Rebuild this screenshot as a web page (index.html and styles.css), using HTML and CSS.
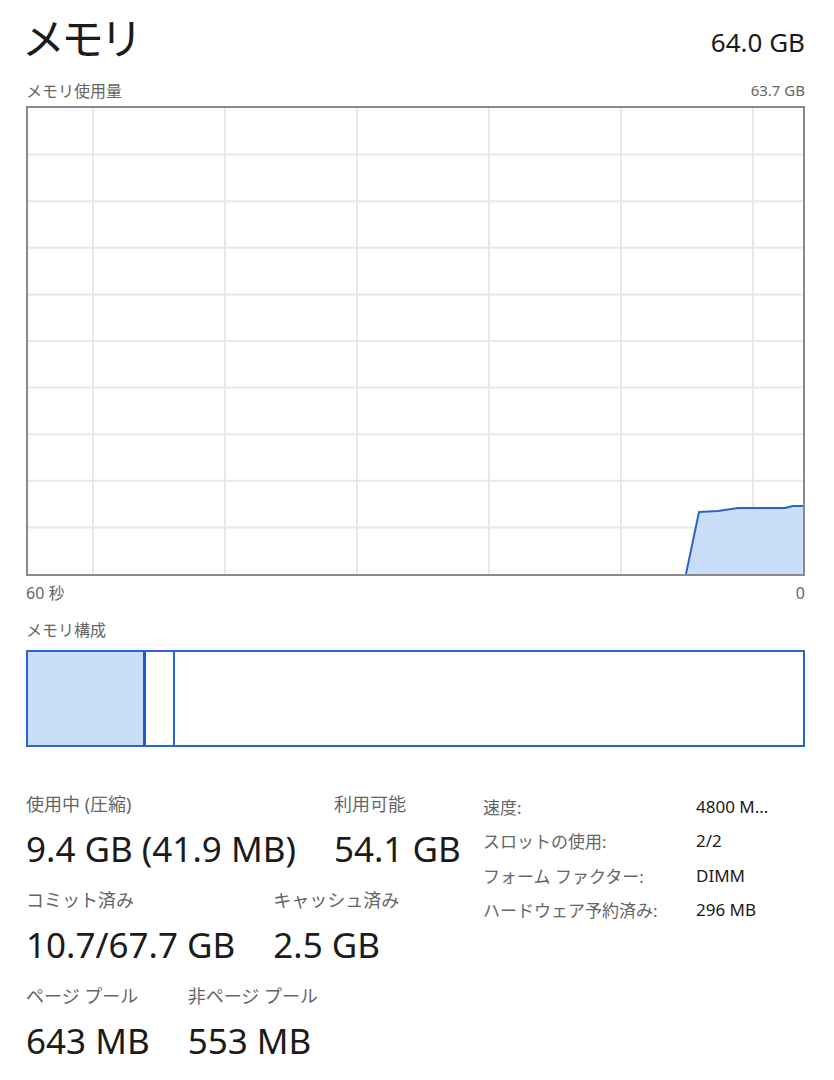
FILE: index.html
```html
<!DOCTYPE html>
<html lang="ja">
<head>
<meta charset="UTF-8">
<title>メモリ</title>
<link rel="stylesheet" href="styles.css">
</head>
<body>

<div class="page">
  <div class="header">
    <h1 class="title">メモリ</h1>
    <div class="total">64.0 GB</div>
  </div>

  <div class="caption-row">
    <span>メモリ使用量</span>
    <span class="caption-num">63.7 GB</span>
  </div>

  <!-- 使用量グラフ (60秒) -->
  <div class="graph">
    <svg width="775" height="466" viewBox="0 0 775 466">
      <g class="grid">
        <line x1="65" y1="0" x2="65" y2="466"/>
        <line x1="197" y1="0" x2="197" y2="466"/>
        <line x1="329" y1="0" x2="329" y2="466"/>
        <line x1="461" y1="0" x2="461" y2="466"/>
        <line x1="593" y1="0" x2="593" y2="466"/>
        <line x1="725" y1="0" x2="725" y2="466"/>
        <line x1="0" y1="46.6" x2="775" y2="46.6"/>
        <line x1="0" y1="93.2" x2="775" y2="93.2"/>
        <line x1="0" y1="139.8" x2="775" y2="139.8"/>
        <line x1="0" y1="186.4" x2="775" y2="186.4"/>
        <line x1="0" y1="233" x2="775" y2="233"/>
        <line x1="0" y1="279.6" x2="775" y2="279.6"/>
        <line x1="0" y1="326.2" x2="775" y2="326.2"/>
        <line x1="0" y1="372.8" x2="775" y2="372.8"/>
        <line x1="0" y1="419.4" x2="775" y2="419.4"/>
      </g>
      <polygon class="area" points="658,466 671,404 690,403 710,400 757,400 765,398 775,398 775,466"/>
      <polyline class="trace" points="658,466 671,404 690,403 710,400 757,400 765,398 775,398"/>
    </svg>
  </div>

  <div class="axis-row">
    <span>60 秒</span>
    <span>0</span>
  </div>

  <div class="caption">メモリ構成</div>
  <div class="composition">
    <div class="seg seg-used"></div>
    <div class="seg seg-modified"></div>
    <div class="seg seg-free"></div>
  </div>

  <div class="stats">
    <div class="stats-left">
      <div class="stat-row">
        <div class="stat">
          <div class="stat-label">使用中 (圧縮)</div>
          <div class="stat-value">9.4 GB (41.9 MB)</div>
        </div>
        <div class="stat">
          <div class="stat-label">利用可能</div>
          <div class="stat-value">54.1 GB</div>
        </div>
      </div>
      <div class="stat-row">
        <div class="stat">
          <div class="stat-label">コミット済み</div>
          <div class="stat-value">10.7/67.7 GB</div>
        </div>
        <div class="stat">
          <div class="stat-label">キャッシュ済み</div>
          <div class="stat-value">2.5 GB</div>
        </div>
      </div>
      <div class="stat-row">
        <div class="stat">
          <div class="stat-label">ページ プール</div>
          <div class="stat-value">643 MB</div>
        </div>
        <div class="stat">
          <div class="stat-label">非ページ プール</div>
          <div class="stat-value">553 MB</div>
        </div>
      </div>
    </div>

    <table class="specs">
      <tr><td class="spec-key">速度:</td><td class="spec-val">4800 M...</td></tr>
      <tr><td class="spec-key">スロットの使用:</td><td class="spec-val">2/2</td></tr>
      <tr><td class="spec-key">フォーム ファクター:</td><td class="spec-val">DIMM</td></tr>
      <tr><td class="spec-key">ハードウェア予約済み:</td><td class="spec-val">296 MB</td></tr>
    </table>
  </div>
</div>

</body>
</html>
```

FILE: styles.css
```css
body { margin: 0; background: #fff; color: #1b1b1b; font-family: "Noto Sans", "Noto Sans CJK JP", sans-serif; }
.page { padding: 0 29px 0 26px; }

.header { display: flex; justify-content: space-between; align-items: flex-end; height: 62px; }
.title { margin: 0 0 0 -4px; font-family: "Noto Sans CJK JP", sans-serif; font-size: 43px; font-weight: normal; line-height: 52px; letter-spacing: -4px; }
.total { font-size: 26px; line-height: 30px; margin-bottom: 5px; }

.caption-row { display: flex; justify-content: space-between; align-items: center; margin-top: 16px; margin-bottom: 4px;
               height: 24px; font-size: 16px; color: #666; }
.caption-num { font-size: 15px; }

.graph { border: 2px solid #8a8a8a; height: 466px; }
.graph svg { display: block; }
.grid line { stroke: #e8e8e8; stroke-width: 2; }
.area { fill: #c9def9; }
.trace { fill: none; stroke: #2a64c8; stroke-width: 2; stroke-linejoin: round; }

.axis-row { display: flex; justify-content: space-between; margin-top: 5px; height: 24px; line-height: 24px;
            font-size: 16px; color: #666; }
.caption { margin-top: 13px; height: 24px; line-height: 24px; font-size: 16px; color: #666; }

.composition { display: flex; margin-top: 8px; height: 93px; border: 2px solid #2a66d1; }
.seg { height: 100%; }
.seg-used { width: 115px; background: #c9def9; border-right: 3px solid #1f5cc9; }
.seg-modified { width: 27px; border-right: 2px solid #2a66d1; }
.seg-free { flex: 1; }

.stats { display: flex; align-items: flex-start; margin-top: 42px; }
.stats-left { width: 457px; flex-shrink: 0; }
.stat-row { display: flex; gap: 38px; margin-bottom: 6px; }
.stat-label { font-size: 18px; line-height: 30px; color: #666; }
.stat-value { font-size: 35px; line-height: 60px; white-space: nowrap; }

.specs { border-collapse: collapse; margin-top: 0; }
.specs td { padding: 0; height: 34.5px; font-size: 17px; white-space: nowrap; }
.spec-key { width: 213px; color: #666; }
.spec-val { font-size: 19px; }
```
